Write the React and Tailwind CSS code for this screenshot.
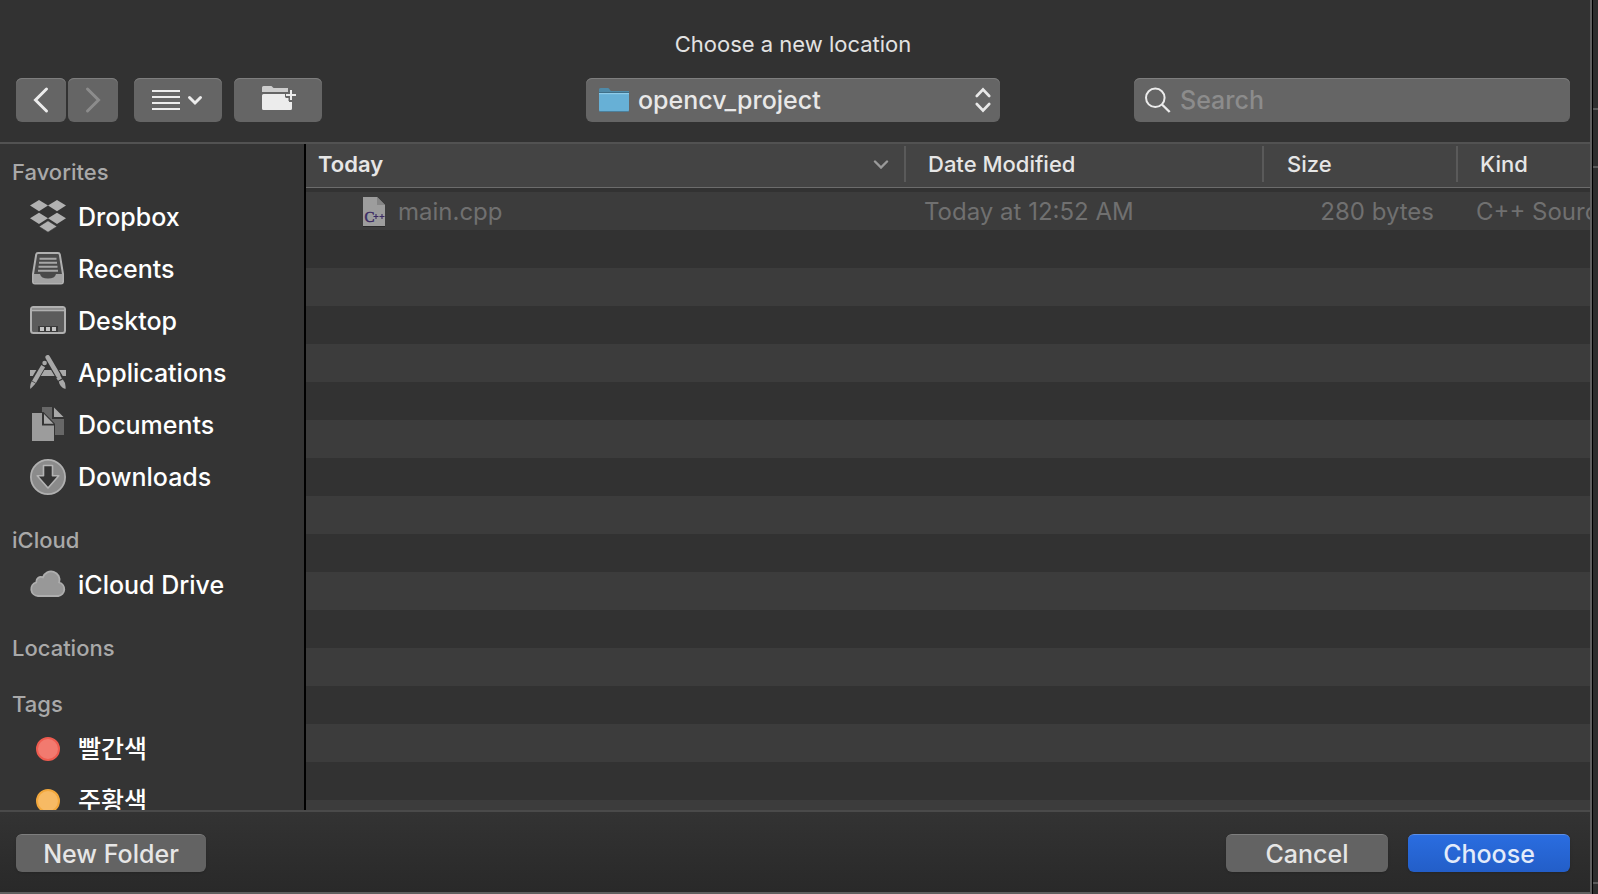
import React, { useState } from 'react'

const DropboxIcon = () => (
    <svg viewBox="0 0 36 36" className="w-9 h-9" fill="#b1b1b1">
        <path d="M9 1l9 5.600-9 5.600-9-5.600z" />
        <path d="M27 1l9 5.600-9 5.600-9-5.600z" />
        <path d="M9 13.700l9 5.600-9 5.600-9-5.600z" />
        <path d="M27 13.700l9 5.600-9 5.600-9-5.600z" />
        <path d="M18 21.800l9 5.600-9 5.800-9-5.800z" stroke="#343434" strokeWidth=".6" />
    </svg>
)

const RecentsIcon = () => (
    <svg viewBox="0 0 36 36" className="w-9 h-9">
        <path
            d="M8 2h20q1.500 0 1.800 1.500L33 23v7.500q0 2-2 2H5q-2 0-2-2V23L6.200 3.500Q6.500 2 8 2z"
            fill="#494949"
            stroke="#b0b0b0"
            strokeWidth="2"
        />
        <path
            d="M3.500 23H10q1 4.500 8 4.500t8-4.500h6.500v7q0 2-2 2h-25q-2 0-2-2z"
            fill="#a2a2a2"
        />
        <path
            d="M9.500 7.700h17M9 11.700h18M8.500 15.700h19M8 19.700h20"
            stroke="#a6a6a6"
            strokeWidth="2"
        />
    </svg>
)

const DesktopIcon = () => (
    <svg viewBox="0 0 36 36" className="w-9 h-9">
        <rect
            x="1"
            y="4"
            width="34"
            height="26"
            rx="2.500"
            fill="#5c5c5c"
            stroke="#b0b0b0"
            strokeWidth="2"
        />
        <path d="M2 6h32" stroke="#8e8e8e" strokeWidth="2" />
        <path d="M2 7.600h32" stroke="#b0b0b0" strokeWidth="1.400" />
        <path d="M8 23h20v6H8z" fill="#3a3a3a" />
        <path d="M10 24h4v4h-4zM16 24h4v4h-4zM22 24h4v4h-4z" fill="#c4c4c4" />
    </svg>
)

const ApplicationsIcon = () => (
    <svg viewBox="0 0 36 36" className="w-9 h-9" fill="none">
        <path d="M0 15h36v6H0z" fill="#a8a8a8" />
        <path d="M14.800 7.500L3 27.500M17.700 2.500l16 27" stroke="#343434" strokeWidth="7" />
        <path
            d="M17.700 2.300L28 20"
            stroke="#a8a8a8"
            strokeWidth="4.600"
            strokeLinecap="round"
        />
        <path d="M28.300 21.800l1.700 2.800" stroke="#a8a8a8" strokeWidth="4.600" />
        <path
            d="M28.800 26.600l4-2q3.400 3.600 2.700 9.400-5.700-1.500-6.700-7.400z"
            fill="#a8a8a8"
        />
        <circle cx="14.600" cy="8" r="2.300" fill="#a8a8a8" />
        <path d="M13.200 11.200L4 26.800" stroke="#a8a8a8" strokeWidth="4.400" />
        <path d="M1.700 26.300l3.900 2.300L.4 34q-.9-3.600 1.300-7.700z" fill="#a8a8a8" />
    </svg>
)

const DocumentsIcon = () => (
    <svg viewBox="0 0 36 36" className="w-9 h-9">
        <path d="M12 0h10v12h12v16H12z" fill="#676767" />
        <path d="M24 .5l9.500 9.500H24z" fill="#a8a8a8" />
        <path
            d="M1 5h12.500L25 16.800V35H1z"
            fill="#343434"
        />
        <path d="M2 6h10v12.500h12V34H2z" fill="#9c9c9c" />
        <path d="M14 7l9.500 9.800H14z" fill="#a8a8a8" />
    </svg>
)

const DownloadsIcon = () => (
    <svg viewBox="0 0 36 36" className="w-9 h-9">
        <circle cx="18" cy="18" r="17.100" fill="#8b8b8b" stroke="#b0b0b0" strokeWidth="1.800" />
        <path
            d="M13.500 6.500h9v10.300h6.300L18 29 7.200 16.800h6.300z"
            fill="#343434"
            stroke="#b4b4b4"
            strokeWidth="1.600"
            strokeLinejoin="round"
        />
    </svg>
)

const CloudIcon = () => (
    <svg viewBox="0 0 36 36" className="w-9 h-9">
        <path
            d="M8 29a7 7 0 0 1-1.800-13.700C6 11.300 9.500 8.800 13 10.300A8.300 8.300 0 0 1 29.200 15.500 6.900 6.900 0 0 1 28.300 29z"
            fill="#989898"
            stroke="#aeaeae"
            strokeWidth="1.800"
        />
    </svg>
)

const TagDot = ({ className }) => (
    <span className={`mx-1.5 h-6 w-6 rounded-full border-2 ${className}`} />
)

const groups = [
    {
        title: 'Favorites',
        items: [
            { name: 'Dropbox', icon: <DropboxIcon /> },
            { name: 'Recents', icon: <RecentsIcon /> },
            { name: 'Desktop', icon: <DesktopIcon /> },
            { name: 'Applications', icon: <ApplicationsIcon /> },
            { name: 'Documents', icon: <DocumentsIcon /> },
            { name: 'Downloads', icon: <DownloadsIcon /> },
        ],
    },
    {
        title: 'iCloud',
        items: [{ name: 'iCloud Drive', icon: <CloudIcon /> }],
    },
    { title: 'Locations', items: [] },
    {
        title: 'Tags',
        items: [
            {
                name: '빨간색',
                icon: <TagDot className="bg-[#f27a6f] border-[#ee5b4f]" />,
            },
            {
                name: '주황색',
                icon: <TagDot className="bg-[#f7ba64] border-[#f3a83c]" />,
            },
        ],
    },
]

const files = [
    {
        name: 'main.cpp',
        modified: 'Today at 12:52 AM',
        size: '280 bytes',
        kind: 'C++ Source',
    },
]

const ToolButton = ({ label, className, children, ...props }) => (
    <button
        aria-label={label}
        className={`flex h-11 items-center justify-center rounded-md bg-[#656565] shadow-[inset_0_1px_0_#7e7e7e] ${className}`}
        {...props}
    >
        {children}
    </button>
)

const Toolbar = ({ query, setQuery }) => (
    <div className="grid grid-cols-[1fr_auto_1fr] items-center pl-4 pr-5">
        <div className="flex">
            <ToolButton label="Back" className="w-[50px]">
                <svg viewBox="0 0 50 44" className="w-[50px] h-11" fill="none">
                    <path
                        d="M30.500 11L19.500 22l11 11"
                        stroke="#ececec"
                        strokeWidth="3"
                        strokeLinecap="round"
                    />
                </svg>
            </ToolButton>
            <ToolButton label="Forward" className="ml-0.5 w-[50px]" disabled>
                <svg viewBox="0 0 50 44" className="w-[50px] h-11" fill="none">
                    <path
                        d="M19.500 11l11 11-11 11"
                        stroke="#8c8c8c"
                        strokeWidth="3"
                        strokeLinecap="round"
                    />
                </svg>
            </ToolButton>
            <ToolButton label="View options" className="ml-4 w-[88px]">
                <svg viewBox="0 0 88 44" className="w-[88px] h-11" fill="none" stroke="#ececec">
                    <path d="M18 13h28M18 19h28M18 25h28M18 31h28" strokeWidth="2" />
                    <path
                        d="M55.500 19.500L61 25l5.500-5.500"
                        strokeWidth="3"
                        strokeLinecap="round"
                    />
                </svg>
            </ToolButton>
            <ToolButton label="New folder with selection" className="ml-3 w-[88px]">
                <svg viewBox="0 0 88 44" className="w-[88px] h-11" fill="none">
                    <path
                        d="M28 14V9.500Q28 8 29.500 8H37q1 0 1.500 1t1.500 1h14v4z"
                        fill="#cdcdcd"
                    />
                    <path
                        d="M28 17.500q0-1.500 1.500-1.500H52v4h3v4h3v6.500q0 1.500-1.500 1.500h-27q-1.500 0-1.500-1.500z"
                        fill="#ececec"
                    />
                    <path d="M57 11v12M51 17h12" stroke="#656565" strokeWidth="5" />
                    <path d="M57 12v10M52 17h10" stroke="#ececec" strokeWidth="2" />
                </svg>
            </ToolButton>
        </div>

        <div className="flex h-11 w-[414px] items-center rounded-md bg-[#656565] pl-[13px] pr-[9px] shadow-[inset_0_1px_0_#7e7e7e]">
            <svg viewBox="0 0 30 26" className="w-[30px] h-[26px] shrink-0">
                <path d="M0 2.500Q0 1 1.500 1H9q1 0 1.700 1.500T12.500 4H30v5H0z" fill="#4f8aa8" />
                <path d="M0 6h30v17q0 1.500-1.500 1.500h-27Q0 24.500 0 23z" fill="#67b0d6" />
                <path d="M0 6h30v1.200H0z" fill="#8fcbe8" />
                <path d="M0 5h30v1H0z" fill="#3f6f88" />
                <path d="M.5 24.500h29" stroke="#4c7f9b" strokeWidth="1" />
            </svg>
            <select
                aria-label="Location"
                className="min-w-0 flex-1 appearance-none bg-transparent pl-[9px] text-[25px] font-medium leading-8 text-[#e8e8e8] outline-none"
            >
                <option>opencv_project</option>
            </select>
            <svg
                viewBox="0 0 16 26"
                className="pointer-events-none w-4 h-[26px]"
                fill="none"
                stroke="#e8e8e8"
                strokeWidth="2.600"
                strokeLinecap="round"
            >
                <path d="M1.800 9L8 2.500 14.200 9M1.800 17L8 23.500l6.200-6.500" />
            </svg>
        </div>

        <label className="ml-auto flex h-11 w-[436px] items-center rounded-md bg-[#656565] pl-[11px] shadow-[inset_0_1px_0_#7e7e7e]">
            <svg
                viewBox="0 0 26 26"
                className="w-[26px] h-[26px] shrink-0"
                fill="none"
                stroke="#ececec"
                strokeWidth="2"
            >
                <circle cx="10.300" cy="10.800" r="9.300" />
                <path d="M17 17.500l7.700 7.500" strokeWidth="2.400" />
            </svg>
            <input
                type="text"
                aria-label="Search"
                placeholder="Search"
                value={query}
                onChange={(e) => setQuery(e.target.value)}
                className="min-w-0 flex-1 bg-transparent pl-[9px] text-[25px] font-medium leading-8 text-[#e8e8e8] outline-none placeholder:text-[#8c8c8c]"
            />
        </label>
    </div>
)

const Sidebar = () => (
    <nav className="flex w-[306px] shrink-0 flex-col gap-[18px] overflow-hidden border-r-2 border-black bg-[#343434] pt-[9px]">
        {groups.map((group) => (
            <section key={group.title} className="shrink-0">
                <h2 className="flex h-[38px] items-center pl-3 text-[22px] font-medium leading-7 text-[#a9a9a9]">
                    {group.title}
                </h2>
                <ul>
                    {group.items.map((item) => (
                        <li key={item.name}>
                            <a
                                href="#"
                                className="flex h-[52px] items-center gap-3 pl-[30px] text-[25px] font-medium leading-8 text-white"
                            >
                                {item.icon}
                                {item.name}
                            </a>
                        </li>
                    ))}
                </ul>
            </section>
        ))}
    </nav>
)

const FileIcon = () => (
    <svg viewBox="0 0 22 30" className="w-[22px] h-[30px] shrink-0">
        <path d="M0 0h14l8 8v21H0z" fill="#9d9d9d" />
        <path d="M14 0l8 8h-8z" fill="#858585" />
        <path d="M0 29.500h22" stroke="#2a2a2a" strokeWidth="1" />
        <text
            x="1.500"
            y="24.500"
            fontFamily="Liberation Serif, serif"
            fontSize="15"
            fill="#3b2a63"
            stroke="#3b2a63"
            strokeWidth=".5"
        >
            C
        </text>
        <path
            d="M10.500 19.500h5M13 17v5M16.500 19.500h5M19 17v5"
            stroke="#3b2a63"
            strokeWidth="1.100"
        />
    </svg>
)

const HeaderCell = ({ children, className, last }) => (
    <th className="border-b border-[#6c6c6c] bg-[#444444] p-0 pb-[5px] pt-0.5 text-left font-medium">
        <div
            className={`flex h-9 items-center whitespace-nowrap ${className} ${
                last ? '' : 'border-r-2 border-[#5a5a5a]'
            }`}
        >
            {children}
        </div>
    </th>
)

const FileList = ({ query }) => (
    <div className="flex min-w-0 flex-1 flex-col overflow-hidden bg-[#323232]">
        <table className="w-full table-fixed border-separate border-spacing-0">
            <colgroup>
                <col />
                <col className="w-[358px]" />
                <col className="w-[194px]" />
                <col className="w-[132px]" />
            </colgroup>
            <thead className="text-[22px] leading-7 text-[#e6e6e6]">
                <tr>
                    <HeaderCell className="justify-between pl-3 pr-[15px]">
                        <span className="font-semibold">Today</span>
                        <svg
                            viewBox="0 0 16 10"
                            className="w-4 h-2.5"
                            fill="none"
                            stroke="#9a9a9a"
                            strokeWidth="2.400"
                            strokeLinecap="round"
                        >
                            <path d="M2 2.500l6 6 6-6" />
                        </svg>
                    </HeaderCell>
                    <HeaderCell className="pl-[22px]">Date Modified</HeaderCell>
                    <HeaderCell className="pl-[23px]">Size</HeaderCell>
                    <HeaderCell className="pl-[22px]" last>
                        Kind
                    </HeaderCell>
                </tr>
            </thead>
            <tbody className="text-2xl leading-8 text-[#707070]">
                <tr className="h-1" />
                {files
                    .filter((file) => file.name.includes(query))
                    .map((file) => (
                        <tr
                            key={file.name}
                            className="h-[38px] whitespace-nowrap bg-[#3c3c3c]"
                        >
                            <td className="p-0 pt-0.5">
                                <div className="flex items-center gap-[13px] pl-[57px]">
                                    <FileIcon />
                                    {file.name}
                                </div>
                            </td>
                            <td className="p-0 pl-[18px] pt-0.5">{file.modified}</td>
                            <td className="p-0 pr-6 pt-0.5 text-right">{file.size}</td>
                            <td className="overflow-hidden p-0 pl-[18px] pt-0.5">
                                {file.kind}
                            </td>
                        </tr>
                    ))}
            </tbody>
        </table>
        <div className="flex-1 bg-[repeating-linear-gradient(to_bottom,#323232_0px,#323232_38px,#3c3c3c_38px,#3c3c3c_76px)]" />
    </div>
)

const FooterButton = ({ className, children }) => (
    <button
        className={`h-[38px] rounded-md border-t text-[25px] font-medium leading-8 shadow-sm ${className}`}
    >
        {children}
    </button>
)

const App = () => {
    const [query, setQuery] = useState('')

    return (
        <div className="flex h-screen overflow-hidden bg-[#2e2e2e] font-['Inter','Noto_Sans_CJK_KR',sans-serif]">
            <main className="flex min-w-0 flex-1 flex-col border-b-2 border-r-2 border-[#5f5f5f] bg-[#323232]">
                <header className="pb-5 pt-7">
                    <h1 className="mb-[18px] pl-4 pr-5 text-center text-[22px] leading-8 text-[#e2e2e2]">
                        Choose a new location
                    </h1>
                    <Toolbar query={query} setQuery={setQuery} />
                </header>

                <div className="flex min-h-0 flex-1 border-t-2 border-[#525252]">
                    <Sidebar />
                    <FileList query={query} />
                </div>

                <footer className="flex gap-5 border-t-2 border-[#4a4a4a] bg-linear-to-b from-[#333333] to-[#292929] pb-5 pl-4 pr-5 pt-[22px]">
                    <FooterButton className="mr-auto w-[190px] border-[#7e7e7e] bg-[#636363] text-[#e6e6e6]">
                        New Folder
                    </FooterButton>
                    <FooterButton className="w-[162px] border-[#7e7e7e] bg-[#636363] text-[#e6e6e6]">
                        Cancel
                    </FooterButton>
                    <FooterButton className="w-[162px] border-[#5c8fe8] bg-linear-to-b from-[#2a6de0] to-[#235ec8] text-[#e3ebfa]">
                        Choose
                    </FooterButton>
                </footer>
            </main>

            {/* edge of the window behind the dialog */}
            <div className="flex w-1.5 shrink-0 flex-col border-l border-black">
                <div className="h-[110px] border-b-2 border-[#5a5a5a]" />
                <div className="h-[58px] border-b-2 border-[#5a5a5a]" />
                <div className="mb-2.5 flex-1 border-b-2 border-[#5a5a5a]" />
            </div>
        </div>
    )
}

export default App
